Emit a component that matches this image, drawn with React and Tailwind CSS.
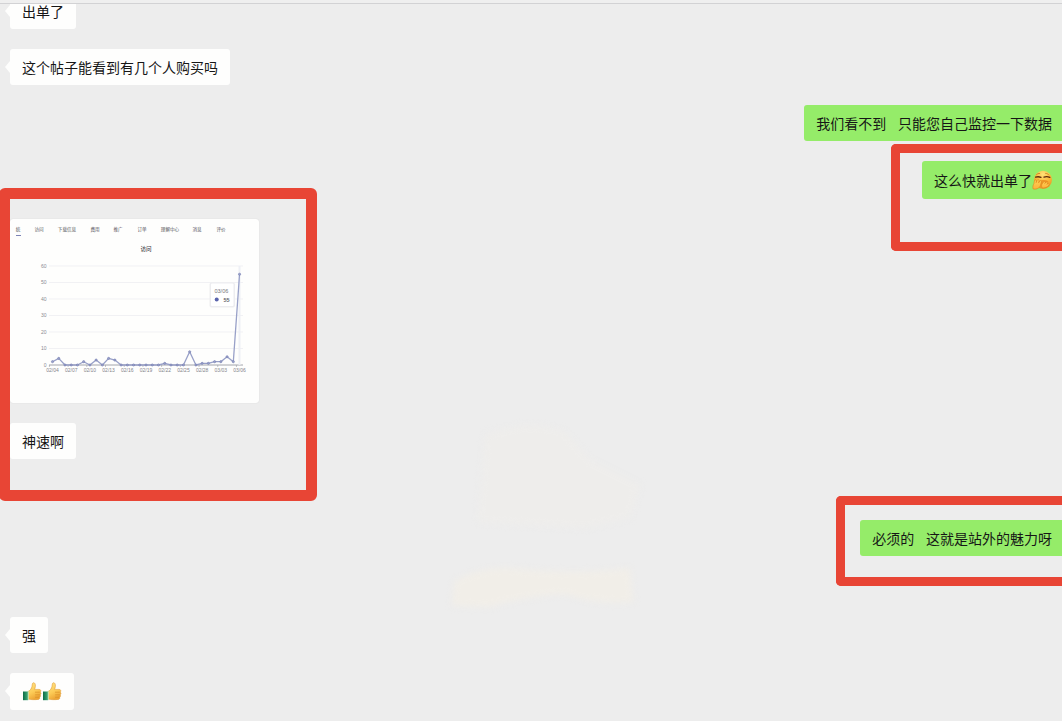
import React from "react";

const VISITS = [2, 4, 0, 0, 0, 2, 0, 3, 0, 4, 3, 0, 0, 0, 0, 0, 0, 0, 1, 0, 0, 0, 8, 0, 1, 1, 2, 2, 5, 2, 55];
const DATES = ["02/04", "02/07", "02/10", "02/13", "02/16", "02/19", "02/22", "02/25", "02/28", "03/03", "03/06"];
const TABS = [
  ["统", 8],
  ["访问", 29],
  ["下载信息", 57],
  ["费用", 85],
  ["推广", 108],
  ["订单", 132],
  ["理解中心", 160],
  ["消息", 187],
  ["评价", 211],
];

const px = (i) => 42.5 + i * 6.235;
const py = (v) => 146 - v * 1.65;

function VisitsChart() {
  const points = VISITS.map((v, i) => `${px(i)},${py(v)}`).join(" ");
  return (
    <svg viewBox="0 0 249 184" className="block h-[184px] w-[249px]" role="img" aria-label="访问">
      {TABS.map(([name, x]) => (
        <text key={name} x={x} y="12" fontSize="4.6" textAnchor="middle" fill="#55555c">
          {name}
        </text>
      ))}
      <rect x="6" y="16" width="5" height="1" fill="#7c83b5" />
      <text x="136" y="32" fontSize="5.5" fontWeight="500" textAnchor="middle" fill="#44444a">
        访问
      </text>
      {[60, 50, 40, 30, 20, 10, 0].map((v) => (
        <g key={v}>
          <path d={`M39 ${py(v)}H233`} stroke={v === 0 ? "#8d8f98" : "#f1f1f4"} strokeWidth={v === 0 ? 0.8 : 1} />
          <text x="36.5" y={py(v) + 1.6} fontSize="5" textAnchor="end" fill="#8b8b92">
            {v}
          </text>
        </g>
      ))}
      {DATES.map((d, i) => (
        <g key={d}>
          <path d={`M${px(i * 3) - 3.1} 146v2`} stroke="#9a9ca5" strokeWidth="0.6" />
          <text x={px(i * 3)} y="153" fontSize="5" textAnchor="middle" fill="#85858c">
            {d}
          </text>
        </g>
      ))}
      <path d="M229.5 47v99" stroke="#eef0f6" strokeWidth="2" />
      <polyline points={points} fill="none" stroke="#98a0c8" strokeWidth="1.3" strokeLinejoin="round" />
      {VISITS.map((v, i) => (
        <circle key={i} cx={px(i)} cy={py(v)} r="1.1" fill="#9aa2cb" stroke="#757db0" strokeWidth="0.6" />
      ))}
      <rect x="199.5" y="63.5" width="25.5" height="25" rx="2" fill="#ededf0" />
      <rect x="201" y="64.5" width="22.5" height="22.5" rx="1" fill="#fff" />
      <text x="204.5" y="74" fontSize="5.5" fill="#77777e">
        03/06
      </text>
      <circle cx="206.7" cy="80.5" r="2" fill="#5a64ad" />
      <text x="213.5" y="82.500" fontSize="5.5" fontWeight="700" fill="#66666d">
        55
      </text>
    </svg>
  );
}

function Giggle() {
  return (
    <svg viewBox="0 0 20 20" className="block h-5 w-5" role="img" aria-label="偷笑">
      <defs>
        <radialGradient id="face" cx="0.5" cy="0.2" r="0.85">
          <stop offset="0" stopColor="#ffe27a" />
          <stop offset="0.5" stopColor="#fbb93a" />
          <stop offset="1" stopColor="#e98a1c" />
        </radialGradient>
        <linearGradient id="hand" x1="0" y1="0" x2="0" y2="1">
          <stop offset="0" stopColor="#ffd257" />
          <stop offset="1" stopColor="#fbb23a" />
        </linearGradient>
      </defs>
      <circle cx="11" cy="9.800" r="9" fill="url(#face)" />
      <path d="M4.5 4.600c1-1 2-1.300 3.200-1.100M13.600 3.400c1.300 0 2.400.5 3.200 1.500" stroke="#c47a22" strokeWidth="0.8" fill="none" strokeLinecap="round" />
      <path d="M3.600 7.200c1.500-.6 3.500-.6 5.400.1M12 7.200c1.800-.7 4-.6 5.800.2" stroke="#5e2d0c" strokeWidth="1.3" fill="none" strokeLinecap="round" />
      <path d="M6.600 11.300c2.800-1.600 7-1.600 9.800 0-.8 3-3 4.800-5.400 5.200z" fill="#ee9627" />
      <path d="M1.200 19c-.8-2 0-4.200.8-5.600.2-1.500.3-3.600 1.400-3.600 1.100 0 1 1.600.8 2.800.6-1.400 1.100-3.300 2.200-3 1 .3.6 2 .2 3.200.7-1.200 1.400-2.600 2.300-2.200 1 .5.300 2.300-.2 3.600-.2 3.200-3.500 5.600-7.500 4.800z" fill="url(#hand)" stroke="#db821b" strokeWidth="0.6" />
      <path d="M10 17.900c-.9-1.800-.5-3.700.8-5 .8-1 1.700-1.800 2.300-1.200.5.500 0 1.200-.4 1.800 1-1 2.200-2.100 2.900-1.400.6.600-.2 1.500-.8 2.200 1-.7 1.900-1 2.300-.3.500 1.300-2.600 4.600-7.100 3.900z" fill="url(#hand)" stroke="#db821b" strokeWidth="0.6" />
    </svg>
  );
}

function ThumbUp() {
  return (
    <svg viewBox="0 0 20 20" className="block h-5 w-5" role="img" aria-label="强">
      <defs>
        <linearGradient id="thumb" x1="0" y1="0" x2="0.4" y2="1">
          <stop offset="0" stopColor="#ffe58c" />
          <stop offset="0.6" stopColor="#fccb56" />
          <stop offset="1" stopColor="#eda535" />
        </linearGradient>
        <linearGradient id="cuff" x1="0" y1="0" x2="1" y2="0">
          <stop offset="0" stopColor="#0c6b45" />
          <stop offset="1" stopColor="#45b07a" />
        </linearGradient>
      </defs>
      <path d="M6 9.500c2.300-1 3.600-3 4-5.200.2-1.800.2-3.200 1.300-3.500 1.500-.4 2.300 1.500 2.100 3.500-.1 1.300-.5 2.300-.8 3.100h4.600c1.700 0 2.100 2 .9 2.700 1.200.6 1.100 2.300 0 2.700.8.700.5 2.100-.5 2.400.5 1-.1 2.100-1.300 2.200-3.200.4-7.400.4-10.300-.4z" fill="url(#thumb)" stroke="#d99024" strokeWidth="0.5" />
      <path d="M13 10.200h4.800M13.200 12.800h4.600M13 15.200h4.200" stroke="#d48a22" strokeWidth="0.6" />
      <path d="M1 9.500h5.200v8.700H1z" fill="url(#cuff)" />
      <path d="M5.800 9.300h1v8.500h-1z" fill="#cfe5b8" />
    </svg>
  );
}

function Incoming({ children }) {
  return (
    <div className="flex items-start">
      <svg viewBox="0 0 5 12" className="mt-3 h-3 w-[5px] shrink-0" aria-hidden="true">
        <path d="M5 0v12L0 6z" fill="#fefefd" />
      </svg>
      <div className="flex rounded-[3px] bg-[#fefefd] px-3 pt-[9px] pb-[7px] leading-5">{children}</div>
    </div>
  );
}

function Outgoing({ children }) {
  return (
    <div className="flex w-fit items-center rounded-l-[3px] bg-[#95ec69] pt-[9px] pr-[10px] pb-[7px] pl-3 leading-5 whitespace-pre">
      {children}
    </div>
  );
}

function Highlight({ className }) {
  return <div aria-hidden="true" className={`pointer-events-none absolute border-[#e84535] ${className}`} />;
}

export default function App() {
  return (
    <div className="relative min-h-screen overflow-hidden bg-[#ededed] font-['Liberation_Sans','Noto_Sans_CJK_SC',sans-serif] text-sm text-[#161616]">
      <svg viewBox="0 0 220 200" className="absolute top-[420px] left-[440px] h-[200px] w-[220px] blur-[3px]" aria-hidden="true">
        <path d="M45 15Q90-2 125 12L150 40 200 65 190 98 145 108 38 102Z" fill="#eeedeb" />
        <path d="M14 162Q40 145 80 149 140 155 190 148L193 182Q155 185 125 174 85 176 50 187L12 186Z" fill="#f1eee8" />
      </svg>
      <header className="relative z-10 h-1 border-b border-[#d2d2d4] bg-[#efefef]" />
      <main className="relative -mt-[11px] flex flex-col gap-5 pl-[5px]">
        <Incoming>出单了</Incoming>
        <Incoming>这个帖子能看到有几个人购买吗</Incoming>
        <div className="flex justify-end">
          <Outgoing>{"我们看不到   只能您自己监控一下数据"}</Outgoing>
        </div>
        <div className="flex justify-end">
          <div className="relative">
            <Highlight className="-top-[17px] right-0 -bottom-[52px] -left-[31px] rounded-l-[5px] border-y-[9px] border-l-[9px]" />
            <Outgoing>
              这么快就出单了
              <span className="pb-[2px]">
                <Giggle />
              </span>
            </Outgoing>
          </div>
        </div>
        <div className="relative flex w-[306px] flex-col gap-5">
          <div className="ml-[5px] w-fit overflow-hidden rounded-[3px] bg-[#fefefd] shadow-[0_0_1px_#c8c8c8]">
            <VisitsChart />
          </div>
          <Incoming>神速啊</Incoming>
          <Highlight className="-top-[31px] -right-[6px] -bottom-[42px] -left-[6px] rounded-[6px] border-[11px]" />
        </div>
        <div className="mt-[41px] flex justify-end">
          <div className="relative">
            <Highlight className="-top-[24px] right-0 -bottom-[30px] -left-[24px] rounded-l-[5px] border-y-[9px] border-l-[9px]" />
            <Outgoing>{"必须的   这就是站外的魅力呀"}</Outgoing>
          </div>
        </div>
        <div className="mt-[41px]">
          <Incoming>强</Incoming>
        </div>
        <Incoming>
          <span className="flex pb-px">
            <ThumbUp />
            <ThumbUp />
          </span>
        </Incoming>
      </main>
    </div>
  );
}
